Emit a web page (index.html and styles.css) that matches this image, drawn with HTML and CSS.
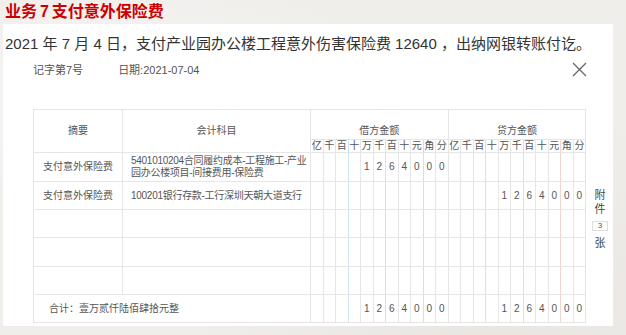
FILE: index.html
```html
<!DOCTYPE html>
<html lang="zh-CN">
<head>
<meta charset="utf-8">
<title>业务 7 支付意外保险费</title>
<link rel="stylesheet" href="styles.css">
</head>
<body>
<h1 class="title">业务 7 支付意外保险费</h1>
<div class="panel">
  <p class="desc">2021 年 7 月 4 日，支付产业园办公楼工程意外伤害保险费 12640 ，出纳网银转账付讫。</p>
  <div class="voucher">
    <div class="v-head">
      <span class="v-no">记字第7号</span>
      <span class="v-date">日期:2021-07-04</span>
      <button class="v-close" aria-label="关闭"><svg width="15" height="15" viewBox="0 0 15 15"><path d="M1 1L14 14M14 1L1 14" stroke="#666" stroke-width="1.3" fill="none"/></svg></button>
    </div>
    <div class="v-body">
      <table class="v-table">
        <colgroup>
          <col class="c-sum"><col class="c-acc">
          <col span="22" class="c-dig">
        </colgroup>
        <tr class="h1">
          <th rowspan="2">摘要</th>
          <th rowspan="2">会计科目</th>
          <th colspan="11" class="grp">借方金额</th>
          <th colspan="11" class="grp">贷方金额</th>
        </tr>
        <tr class="h2">
          <th>亿</th><th>千</th><th class="b">百</th><th>十</th><th>万</th><th class="b">千</th><th>百</th><th>十</th><th class="r">元</th><th>角</th><th>分</th>
          <th>亿</th><th>千</th><th class="b">百</th><th>十</th><th>万</th><th class="b">千</th><th>百</th><th>十</th><th class="r">元</th><th>角</th><th>分</th>
        </tr>
        <tr class="row r29">
          <td>支付意外保险费</td>
          <td class="acc">5401010204合同履约成本-工程施工-产业<br>园办公楼项目-间接费用-保险费</td>
          <td></td><td></td><td class="b"></td><td></td><td>1</td><td class="b">2</td><td>6</td><td>4</td><td class="r">0</td><td>0</td><td>0</td>
          <td></td><td></td><td class="b"></td><td></td><td></td><td class="b"></td><td></td><td></td><td class="r"></td><td></td><td></td>
        </tr>
        <tr class="row">
          <td>支付意外保险费</td>
          <td class="acc">100201银行存款-工行深圳天朝大道支行</td>
          <td></td><td></td><td class="b"></td><td></td><td></td><td class="b"></td><td></td><td></td><td class="r"></td><td></td><td></td>
          <td></td><td></td><td class="b"></td><td></td><td>1</td><td class="b">2</td><td>6</td><td>4</td><td class="r">0</td><td>0</td><td>0</td>
        </tr>
        <tr class="row">
          <td></td><td class="acc"></td>
          <td></td><td></td><td class="b"></td><td></td><td></td><td class="b"></td><td></td><td></td><td class="r"></td><td></td><td></td>
          <td></td><td></td><td class="b"></td><td></td><td></td><td class="b"></td><td></td><td></td><td class="r"></td><td></td><td></td>
        </tr>
        <tr class="row r29">
          <td></td><td class="acc"></td>
          <td></td><td></td><td class="b"></td><td></td><td></td><td class="b"></td><td></td><td></td><td class="r"></td><td></td><td></td>
          <td></td><td></td><td class="b"></td><td></td><td></td><td class="b"></td><td></td><td></td><td class="r"></td><td></td><td></td>
        </tr>
        <tr class="row">
          <td></td><td class="acc"></td>
          <td></td><td></td><td class="b"></td><td></td><td></td><td class="b"></td><td></td><td></td><td class="r"></td><td></td><td></td>
          <td></td><td></td><td class="b"></td><td></td><td></td><td class="b"></td><td></td><td></td><td class="r"></td><td></td><td></td>
        </tr>
        <tr class="row total">
          <td colspan="2" class="sum-text">合计：壹万贰仟陆佰肆拾元整</td>
          <td></td><td></td><td class="b"></td><td></td><td>1</td><td class="b">2</td><td>6</td><td>4</td><td class="r">0</td><td>0</td><td>0</td>
          <td></td><td></td><td class="b"></td><td></td><td>1</td><td class="b">2</td><td>6</td><td>4</td><td class="r">0</td><td>0</td><td>0</td>
        </tr>
      </table>
      <div class="attach">
        <div class="att-t">附</div>
        <div class="att-t">件</div>
        <div class="att-box">3</div>
        <div class="att-t">张</div>
      </div>
    </div>
  </div>
</div>
</body>
</html>
```

FILE: styles.css
```css
html, body {
  margin: 0;
  padding: 0;
}
body {
  width: 626px;
  height: 335px;
  overflow: hidden;
  background: #f0eeeb;
  background-image:
    radial-gradient(ellipse at 20% 30%, rgba(255,255,255,0.5), rgba(255,255,255,0) 40%),
    radial-gradient(ellipse at 80% 90%, rgba(220,216,210,0.4), rgba(220,216,210,0) 45%);
  font-family: "Liberation Sans", "Noto Sans CJK SC", sans-serif;
}
.title {
  margin: 0;
  padding-left: 5px;
  height: 24px;
  line-height: 24px;
  font-size: 16px;
  font-weight: bold;
  word-spacing: -1.5px;
  color: #cc0000;
}
.panel {
  margin-left: 3px;
  width: 610px;
  height: 302px;
  background: #fff;
}
.desc {
  margin: 0;
  padding: 8px 0 0 2px;
  font-size: 15px;
  line-height: 24px;
  color: #333;
  white-space: nowrap;
}
.voucher {
  padding-left: 30px;
  width: 575px;
}
.v-head {
  display: flex;
  align-items: center;
  height: 18px;
  margin-top: 4px;
  font-size: 11px;
  color: #555;
}
.v-date {
  margin-left: 35px;
}
.v-close {
  margin-left: auto;
  margin-right: 21px;
  width: 15px;
  height: 15px;
  padding: 0;
  border: 0;
  background: none;
  display: flex;
}
.v-body {
  display: flex;
  align-items: flex-start;
  margin-top: 31px;
}
.v-table {
  border-collapse: collapse;
  table-layout: fixed;
  width: 553px;
  font-size: 10px;
  color: #555;
}
.c-sum { width: 89px; }
.c-acc { width: 188px; }
.c-dig { width: 12.5px; }
.v-table th,
.v-table td {
  border: 1px solid #e6e6e6;
  padding: 0;
  font-weight: normal;
  text-align: center;
  line-height: 12px;
  white-space: nowrap;
  overflow: hidden;
}
.v-table .b { border-right-color: #cfe3f6; }
.v-table .r { border-right-color: #f4d3d3; }
.h1 { height: 30px; }
.h1 .grp {
  vertical-align: bottom;
  padding-bottom: 2px;
}
.h2 { height: 13px; }
.row { height: 28px; }
.row.r29 { height: 29px; }
.v-table .acc {
  text-align: left;
  padding-left: 8px;
  letter-spacing: -0.28px;
}
.v-table .sum-text {
  text-align: left;
  padding-left: 15px;
}
.attach {
  margin-left: 6px;
  width: 16px;
  padding-top: 79px;
  font-size: 11px;
  line-height: 14px;
  text-align: center;
}
.att-t {
  color: #444;
}
.att-box {
  margin: 5px 0;
  height: 10px;
  box-sizing: border-box;
  border: 1px solid #ddd;
  font-size: 8px;
  line-height: 8px;
  color: #555;
}
```
